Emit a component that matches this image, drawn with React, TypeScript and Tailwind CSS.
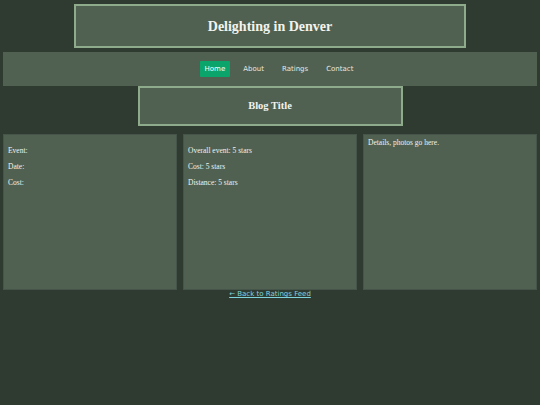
import React from "react";

const NAV = ["Home", "About", "Ratings", "Contact"];

function Panel({ children, className = "" }: { children?: React.ReactNode; className?: string }) {
  return (
    <div className={`border border-[#46554a] bg-[#506151] px-[4px] ${className}`}>{children}</div>
  );
}

export default function App() {
  return (
    <div className="min-h-[405px] bg-[#2f3a31] pt-1 font-['Liberation_Serif',serif] text-[#f1f3ee]">
      <header className="mx-auto flex h-[44px] w-[392px] items-center justify-center border-2 border-[#8eac8c] bg-[#506151]">
        <h1 className="text-[14px] font-bold">Delighting in Denver</h1>
      </header>

      <nav className="mx-[3px] mt-[4px] flex h-[34px] items-center justify-center bg-[#506151] font-['DejaVu_Sans',sans-serif] text-[7px] text-[#e4e8e0]">
        <ul className="flex items-center gap-[8px] pl-[18px]">
          {NAV.map((item, i) => (
            <li key={item}>
              <a
                href="#"
                className={
                  i === 0
                    ? "block rounded-[1px] bg-[#0ba56b] px-[5px] py-[3px] text-white"
                    : "block px-[5px] py-[3px]"
                }
              >
                {item}
              </a>
            </li>
          ))}
        </ul>
      </nav>

      <div className="mx-auto flex h-[40px] w-[265px] items-center justify-center border-2 border-[#8eac8c] bg-[#506151]">
        <h2 className="text-[10.5px] font-bold">Blog Title</h2>
      </div>

      <main className="mx-[3px] mt-[8px] grid h-[156px] grid-cols-3 gap-[6px] text-[7.5px] leading-[8px]">
        <Panel className="pt-[4px]">
          <p className="my-[8px]">Event:</p>
          <p className="my-[8px]">Date:</p>
          <p className="my-[8px]">Cost:</p>
        </Panel>
        <Panel className="pt-[4px]">
          <p className="my-[8px]">Overall event: 5 stars</p>
          <p className="my-[8px]">Cost: 5 stars</p>
          <p className="my-[8px]">Distance: 5 stars</p>
        </Panel>
        <Panel className="pt-[4px]">
          <p>Details, photos go here.</p>
        </Panel>
      </main>

      <div className="text-center font-['DejaVu_Sans',sans-serif] text-[7px] leading-[9px]">
        <a href="#" className="text-[#7fd3dc] underline">
          ← Back to Ratings Feed
        </a>
      </div>
    </div>
  );
}
